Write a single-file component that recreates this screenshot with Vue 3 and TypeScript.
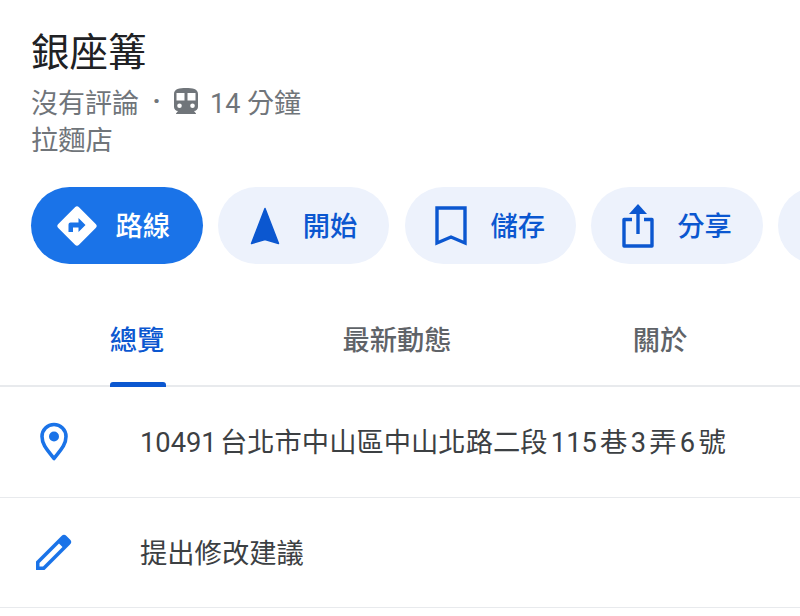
<template>
  <div class="place">
    <header class="head">
      <h1 class="name">銀座篝</h1>
      <div class="meta">
        <span>沒有評論</span>
        <span class="dot">·</span>
        <svg class="train" viewBox="0 0 24 26" width="24" height="26">
          <path
            fill="#70757a"
            fill-rule="evenodd"
            d="M12 0C5.500 0 0 .9 0 6v13c0 2.300 1.800 4 4 4L2 25.500V26h20v-.5L20 23c2.200 0 4-1.700 4-4V6c0-5.100-5.500-6-12-6ZM2.500 5H10.500V12.500H2.500ZM13.500 5H21.500V12.500H13.500ZM5.500 15.500a2.300 2.300 0 1 1 0 4.600 2.300 2.300 0 0 1 0-4.600ZM18.500 15.500a2.300 2.300 0 1 1 0 4.600 2.300 2.300 0 0 1 0-4.600Z"
          />
        </svg>
        <span>14 分鐘</span>
      </div>
      <div class="category">拉麵店</div>
    </header>

    <div class="actions">
      <button class="action primary">
        <svg viewBox="0 0 40 40" width="40" height="40">
          <path fill="#fff" d="M18 1.300a2.800 2.800 0 0 1 4 0L38.700 18a2.800 2.800 0 0 1 0 4L22 38.700a2.800 2.800 0 0 1-4 0L1.300 22a2.800 2.800 0 0 1 0-4Z" />
          <path fill="#1a73e8" d="M11.500 26V18.500a2 2 0 0 1 2-2h8v-4.500l7 7-7 7v-4.500h-5.500V26Z" />
        </svg>
        <span class="action-label">路線</span>
      </button>
      <button class="action">
        <svg viewBox="0 0 30 38" width="30" height="38">
          <path fill="#0b57d0" stroke="#0b57d0" stroke-width="1.500" stroke-linejoin="round" d="M15 1.500 28.500 36.500 15 32.500 1.500 36.500Z" />
        </svg>
        <span class="action-label">開始</span>
      </button>
      <button class="action">
        <svg viewBox="0 0 32 40" width="32" height="40">
          <path fill="none" stroke="#0b57d0" stroke-width="3.400" d="M2 2H30V37L16 31 2 37Z" />
        </svg>
        <span class="action-label">儲存</span>
      </button>
      <button class="action">
        <svg viewBox="0 0 32 44" width="32" height="44">
          <path fill="none" stroke="#0b57d0" stroke-width="3.400" stroke-linejoin="round" d="M10 15.500H2V42H30V15.500H22" />
          <path fill="none" stroke="#0b57d0" stroke-width="3.400" d="M16 30V4" />
          <path fill="#0b57d0" d="M16 0 25 10H7Z" />
        </svg>
        <span class="action-label">分享</span>
      </button>
      <button class="action"></button>
    </div>

    <nav class="tabs">
      <div class="tab active"><span class="tab-label">總覽</span></div>
      <div class="tab"><span class="tab-label">最新動態</span></div>
      <div class="tab"><span class="tab-label">關於</span></div>
    </nav>

    <div class="row">
      <svg class="row-icon" viewBox="0 0 28 40" width="28" height="40">
        <path fill="none" stroke="#1a73e8" stroke-width="3.600" stroke-linejoin="round" d="M14 36.500C9 29.500 2 23.500 2 14.500a12 12 0 0 1 24 0C26 23.500 19 29.500 14 36.500Z" />
        <circle cx="14" cy="14.500" r="5" fill="#1a73e8" />
      </svg>
      <span class="row-text address">10491 台北市中山區中山北路二段 115 巷 3 弄 6 號</span>
    </div>
    <div class="row">
      <svg class="row-icon" viewBox="0 0 36 36" width="36" height="36">
        <path fill="#1a73e8" fill-rule="evenodd" d="M0 36V27.500L25.500 2a3.500 3.500 0 0 1 5 0L34 5.500a3.500 3.500 0 0 1 0 5L8.500 36ZM3.500 32.500H7L26.500 13 23 9.500 3.500 29Z" />
      </svg>
      <span class="row-text">提出修改建議</span>
    </div>
  </div>
</template>

<script setup lang="ts">
</script>

<style>
html,
body {
  background: #fff;
}
</style>

<style scoped>
.place {
  width: 800px;
  height: 616px;
  overflow: hidden;
  background: #fff;
  font-family: Roboto, "Noto Sans CJK TC", sans-serif;
  font-size: 27.300px;
  color: #3c4043;
}
.head {
  padding: 29px 0 0 31px;
}
.name {
  margin: 0 0 5px;
  font-size: 38.500px;
  font-weight: 400;
  line-height: 48px;
  color: #202124;
}
.meta {
  display: flex;
  align-items: center;
  height: 38px;
  font-size: 27px;
  color: #70757a;
}
.dot {
  width: 35px;
  text-align: center;
  font-weight: 700;
}
.train {
  margin-right: 12px;
}
.category {
  height: 38px;
  margin-top: 2px;
  line-height: 38px;
  color: #70757a;
}
.actions {
  display: flex;
  gap: 15.250px;
  margin-top: 27px;
  padding-left: 31px;
}
.action {
  flex: 0 0 171.500px;
  height: 77px;
  display: flex;
  align-items: center;
  justify-content: center;
  gap: 23px;
  padding: 0;
  border: 0;
  border-radius: 38.500px;
  background: #edf2fc;
  color: #0b57d0;
  font: inherit;
  font-weight: 500;
}
.action-label {
  padding-bottom: 4px;
}
.action.primary {
  gap: 18px;
  padding-right: 6px;
  background: #1a73e8;
  color: #fff;
}
.tabs {
  display: grid;
  grid-template-columns: 264px 256px 270px;
  box-sizing: border-box;
  height: 123px;
  padding-left: 5px;
  border-bottom: 2px solid #e8eaed;
}
.tab {
  display: flex;
  justify-content: center;
  align-items: center;
  padding-top: 33px;
  color: #5f6368;
  font-weight: 500;
}
.tab-label {
  position: relative;
  display: block;
  line-height: 38px;
}
.tab.active {
  color: #0b57d0;
}
.tab.active .tab-label::after {
  content: "";
  position: absolute;
  left: 0;
  right: -2px;
  top: 60px;
  height: 5px;
  border-radius: 3px 3px 0 0;
  background: #0b57d0;
}
.row {
  box-sizing: border-box;
  height: 110.500px;
  display: flex;
  align-items: center;
  border-bottom: 1px solid #e8eaed;
  color: #3c4043;
  position: relative;
  padding-left: 140px;
}
.row-text {
  padding-bottom: 3px;
}
.address {
  word-spacing: -3.500px;
}
.row-icon {
  position: absolute;
  left: 54px;
  top: 50%;
  transform: translate(-50%, -50%);
}
</style>
